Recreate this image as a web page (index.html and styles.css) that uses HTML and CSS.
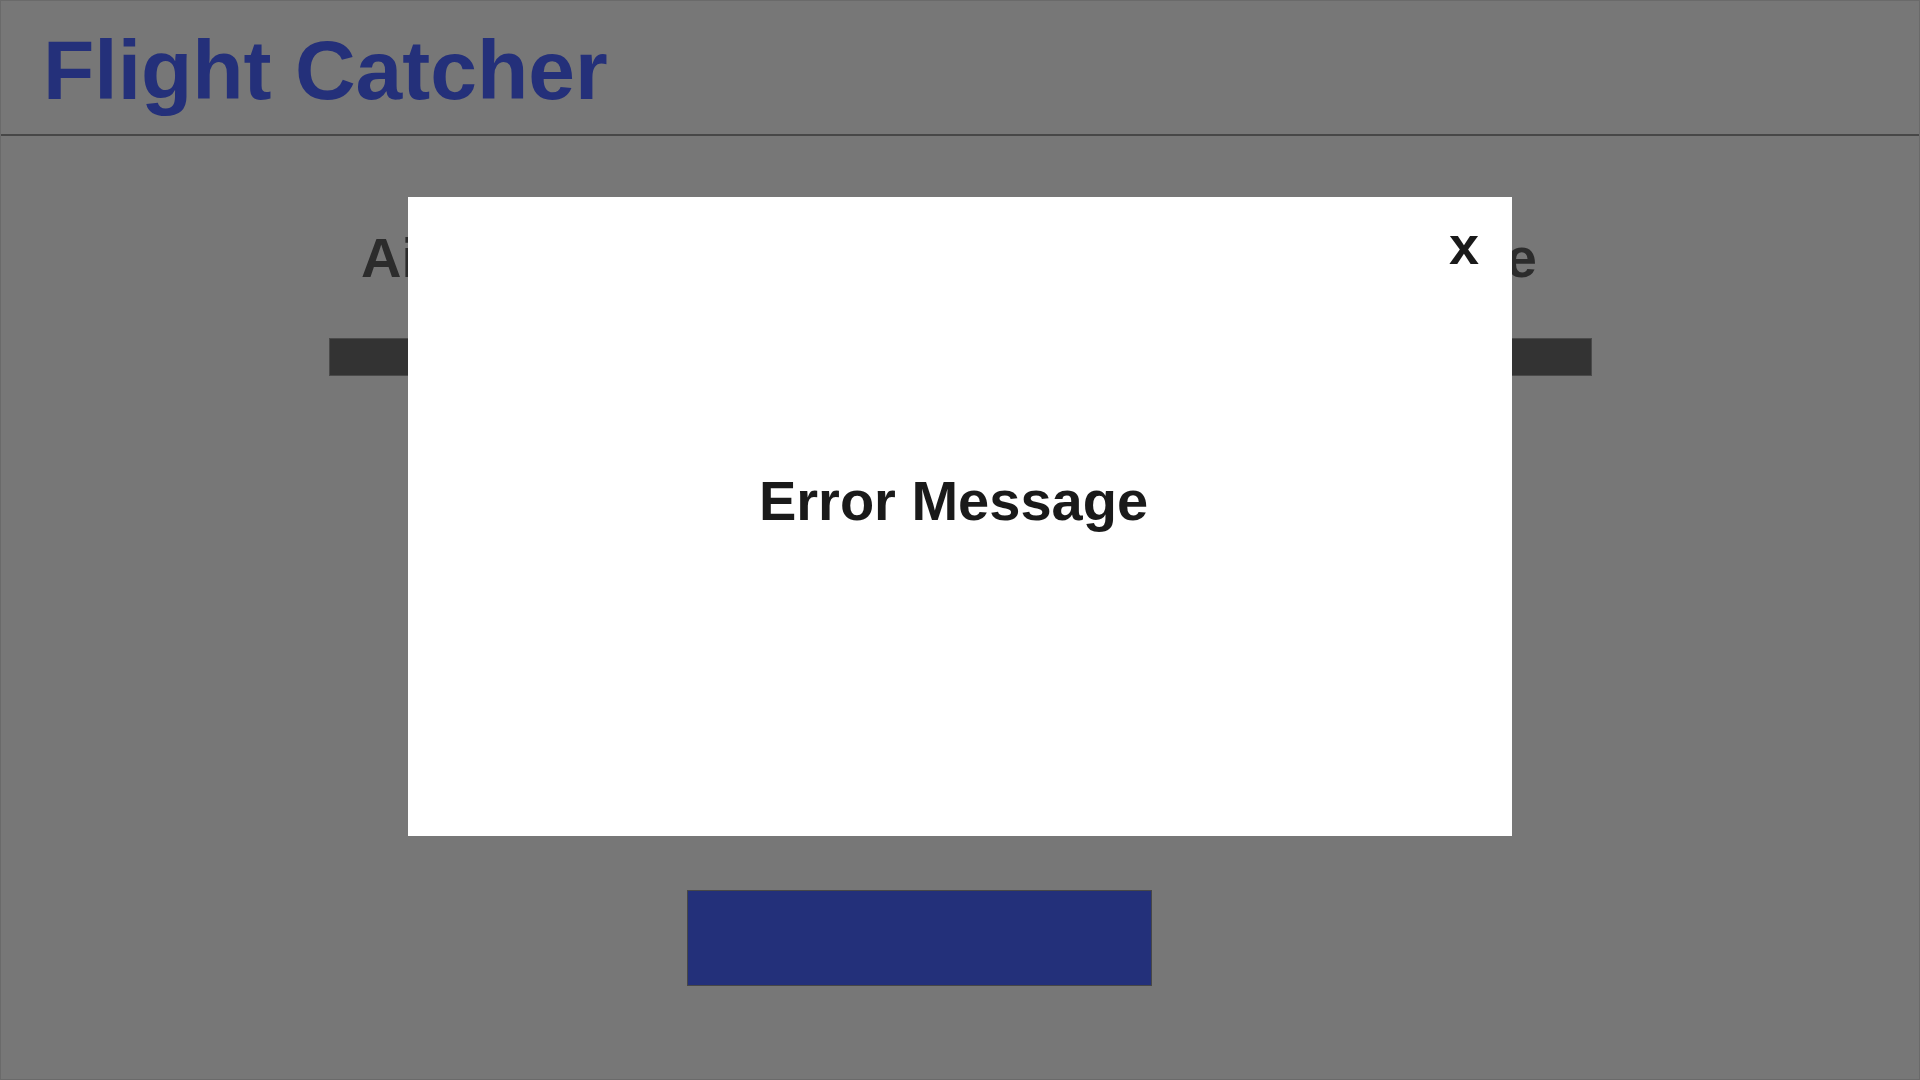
FILE: index.html
```html
<!DOCTYPE html>
<html lang="en">
<head>
<meta charset="utf-8">
<title>Flight Catcher</title>
<link rel="stylesheet" href="styles.css">
</head>
<body>
<div class="page">
  <header class="header">
    <h1 class="title">Flight Catcher</h1>
  </header>
  <main class="main">
    <div class="form">
      <div class="field field-left">
        <label class="label">Airline</label>
        <div class="bar"></div>
      </div>
      <div class="field field-right">
        <label class="label">Departure Date</label>
        <div class="bar"></div>
      </div>
    </div>
    <div class="actions">
      <button class="search" type="button"></button>
    </div>
  </main>
  <div class="modal">
    <div class="modal-top">
      <span class="close">x</span>
    </div>
    <p class="message">Error Message</p>
  </div>
</div>
</body>
</html>
```
FILE: styles.css
```css
html, body {
  margin: 0;
  padding: 0;
}
body {
  font-family: "Liberation Sans", Arial, sans-serif;
  background: #777777;
}
.page {
  position: relative;
  width: 1920px;
  height: 1080px;
  box-sizing: border-box;
  border: 1px solid #6a6a6a;
  background: #777777;
  overflow: hidden;
}
.header {
  height: 135px;
  box-sizing: border-box;
  border-bottom: 2px solid #474747;
  padding: 27px 0 0 42px;
}
.title {
  margin: 0;
  font-size: 84px;
  line-height: 84px;
  font-weight: 700;
  color: #24307a;
}
.main {
  padding: 94px 327px 0 328px;
}
.form {
  display: grid;
  grid-template-columns: 1fr 1fr;
  column-gap: 40px;
}
.field {
  display: flex;
  flex-direction: column;
}
.label {
  font-size: 56px;
  line-height: 56px;
  font-weight: 700;
  color: #2c2c2c;
  height: 56px;
  white-space: nowrap;
}
.field-left .label {
  padding-left: 32px;
}
.field-right .label {
  text-align: right;
  padding-right: 55px;
}
.bar {
  margin-top: 52px;
  height: 38px;
  box-sizing: border-box;
  background: #333333;
  border: 1px solid #4a4a4a;
}
.actions {
  padding-left: 358px;
  margin-top: 514px;
}
.search {
  display: block;
  width: 465px;
  height: 96px;
  padding: 0;
  background: #23307a;
  border: 1px solid #474747;
}
.modal {
  position: absolute;
  left: 407px;
  top: 196px;
  width: 1104px;
  height: 639px;
  box-sizing: border-box;
  background: #ffffff;
  padding: 21px 33px 0 33px;
}
.modal-top {
  display: flex;
  justify-content: flex-end;
  height: 54px;
}
.close {
  font-size: 54px;
  line-height: 54px;
  font-weight: 700;
  color: #1a1a1a;
}
.message {
  margin: 201px 0 0 0;
  padding-right: 13px;
  text-align: center;
  font-size: 56px;
  line-height: 56px;
  font-weight: 700;
  color: #1a1a1a;
}
```
